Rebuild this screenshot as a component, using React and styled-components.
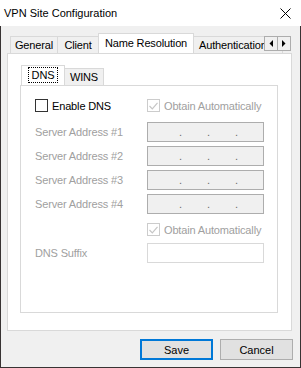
import React from "react";
import styled, { createGlobalStyle } from "styled-components";

const Global = createGlobalStyle`
  html, body {
    margin: 0;
    padding: 0;
    background: #ffffff;
  }
  * {
    box-sizing: border-box;
  }
`;

const Window = styled.div`
  width: 301px;
  height: 368px;
  display: flex;
  flex-direction: column;
  font-family: "Liberation Sans", Arial, sans-serif;
  font-size: 11px;
  letter-spacing: -0.15px;
  color: #000;
  background: #fff;
`;

const TitleBar = styled.div`
  height: 26px;
  flex: none;
  display: flex;
  align-items: center;
  justify-content: space-between;
  padding: 0 10px 0 4px;
  background: #fff;
  font-size: 11px;
  letter-spacing: 0;
`;

const Body = styled.div`
  flex: 1;
  display: flex;
  flex-direction: column;
  background: #f0f0f0;
  border: 1px solid #383333;
  border-top: none;
  padding: 7px 8px 0 6px;
`;

const TabStrip = styled.div`
  position: relative;
  height: 20px;
  display: flex;
  align-items: flex-end;
  overflow: hidden;
  padding-left: ${(p) => p.$indent}px;
  flex: none;
`;

const Tab = styled.div`
  flex: none;
  width: ${(p) => p.$w}px;
  height: ${(p) => (p.$active ? p.$activeH : p.$h)}px;
  margin-right: -1px;
  margin-bottom: ${(p) => (p.$active ? -1 : 0)}px;
  position: relative;
  z-index: ${(p) => (p.$active ? 2 : 1)};
  background: ${(p) => (p.$active ? "#ffffff" : "#f0f0f0")};
  border: 1px solid #d9d9d9;
  border-bottom: none;
  display: flex;
  align-items: center;
  justify-content: center;
  white-space: nowrap;
  overflow: hidden;
  padding-bottom: ${(p) => (p.$active ? 2 : 0)}px;
`;

const ClipTab = styled(Tab)`
  justify-content: flex-start;
  padding-left: 5px;
`;

const ScrollButtons = styled.div`
  position: absolute;
  right: 1px;
  top: 3px;
  display: flex;
  z-index: 3;
`;

const ScrollButton = styled.div`
  width: 14px;
  height: 15px;
  background: #f0f0f0;
  border: 1px solid #adadad;
  margin-left: -1px;
  display: flex;
  align-items: center;
  justify-content: center;
`;

const Panel = styled.div`
  height: 278px;
  flex: none;
  background: #fff;
  border: 1px solid #d9d9d9;
  padding: 11px 13px 17px 12px;
  display: flex;
  flex-direction: column;
`;

const FocusText = styled.span`
  outline: 1px dotted #000;
  padding: 1px 3px;
  line-height: 12px;
`;

const InnerPanel = styled.div`
  flex: 1;
  border: 1px solid #d9d9d9;
  background: #fff;
  padding: 13px 0 0 14px;
  display: flex;
  flex-direction: column;
`;

const Row = styled.div`
  display: flex;
  align-items: center;
  height: ${(p) => p.$h}px;
  margin-top: ${(p) => p.$top}px;
`;

const Label = styled.div`
  width: 112px;
  flex: none;
  color: #a0a0a0;
`;

const CheckLabel = styled.label`
  display: flex;
  align-items: center;
  gap: 4px;
  color: ${(p) => (p.$disabled ? "#a0a0a0" : "#000")};
  width: ${(p) => (p.$w ? p.$w + "px" : "auto")};
  flex: none;
`;

const Box = styled.span`
  width: 13px;
  height: 13px;
  flex: none;
  border: 1px solid ${(p) => (p.$disabled ? "#cccccc" : "#333333")};
  background: #fff;
  display: flex;
  align-items: center;
  justify-content: center;
`;

const Field = styled.div`
  width: 117px;
  height: 20px;
  flex: none;
  border: 1px solid ${(p) => (p.$ip ? "#adadad" : "#d9d9d9")};
  background: ${(p) => (p.$ip ? "#f0f0f0" : "#ffffff")};
  display: flex;
  align-items: center;
  padding-left: 31px;
  color: #6d6d6d;
`;

const Dot = styled.span`
  width: 28px;
  flex: none;
  line-height: 11px;
`;

const ButtonRow = styled.div`
  display: flex;
  justify-content: flex-end;
  gap: 7px;
  margin-top: 8px;
  margin-right: -1px;
`;

const Button = styled.button`
  width: 73px;
  height: 21px;
  font-family: inherit;
  font-size: 11px;
  color: #000;
  background: #e1e1e1;
  border: ${(p) => (p.$default ? "2px solid #0078d7" : "1px solid #adadad")};
  padding: 0;
`;

function Check({ disabled, checked }) {
  return (
    <Box $disabled={disabled}>
      {checked && (
        <svg width="9" height="8" viewBox="0 0 9 8">
          <path d="M0.5 4 L3.3 6.8 L8.5 0.8" fill="none" stroke="#c6c6c6" strokeWidth="1.2" />
        </svg>
      )}
    </Box>
  );
}

function IpField() {
  return (
    <Field $ip>
      <Dot>.</Dot>
      <Dot>.</Dot>
      <Dot>.</Dot>
    </Field>
  );
}

const servers = ["Server Address #1", "Server Address #2", "Server Address #3", "Server Address #4"];

export default function App() {
  return (
    <Window>
      <Global />
      <TitleBar>
        <span>VPN Site Configuration</span>
        <svg width="11" height="11" viewBox="0 0 11 11">
          <path d="M0.5 0.5 L10.5 10.5 M10.5 0.5 L0.5 10.5" stroke="#000" strokeWidth="1" />
        </svg>
      </TitleBar>
      <Body>
        <TabStrip $indent={3}>
          <Tab $w={48} $h={17}>General</Tab>
          <Tab $w={42} $h={17}>Client</Tab>
          <Tab $w={96} $h={17} $active $activeH={21}>Name Resolution</Tab>
          <ClipTab $w={90} $h={17}>Authentication</ClipTab>
          <ScrollButtons>
            <ScrollButton>
              <svg width="4" height="7" viewBox="0 0 4 7">
                <path d="M4 0 L0.5 3.5 L4 7 Z" fill="#000" />
              </svg>
            </ScrollButton>
            <ScrollButton>
              <svg width="4" height="7" viewBox="0 0 4 7">
                <path d="M0 0 L3.5 3.5 L0 7 Z" fill="#000" />
              </svg>
            </ScrollButton>
          </ScrollButtons>
        </TabStrip>
        <Panel>
          <TabStrip $indent={1}>
            <Tab $w={44} $h={17} $active $activeH={21}>
              <FocusText>DNS</FocusText>
            </Tab>
            <Tab $w={40} $h={17}>WINS</Tab>
          </TabStrip>
          <InnerPanel>
            <Row $h={13} $top={0}>
              <CheckLabel $w={112}>
                <Check />
                Enable DNS
              </CheckLabel>
              <CheckLabel $disabled>
                <Check disabled checked />
                Obtain Automatically
              </CheckLabel>
            </Row>
            {servers.map((s, i) => (
              <Row key={s} $h={20} $top={i === 0 ? 10 : 4}>
                <Label>{s}</Label>
                <IpField />
              </Row>
            ))}
            <Row $h={13} $top={9}>
              <Label />
              <CheckLabel $disabled>
                <Check disabled checked />
                Obtain Automatically
              </CheckLabel>
            </Row>
            <Row $h={20} $top={7}>
              <Label>DNS Suffix</Label>
              <Field />
            </Row>
          </InnerPanel>
        </Panel>
        <ButtonRow>
          <Button $default>Save</Button>
          <Button>Cancel</Button>
        </ButtonRow>
      </Body>
    </Window>
  );
}
